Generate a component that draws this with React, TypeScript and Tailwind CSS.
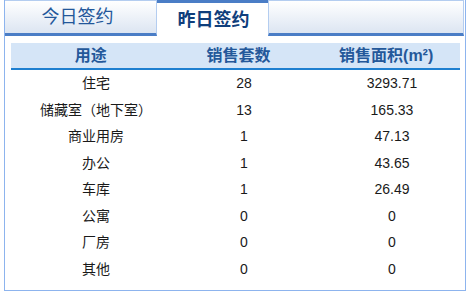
import React from "react";

const rows: [string, string, string][] = [
  ["住宅", "28", "3293.71"],
  ["储藏室（地下室）", "13", "165.33"],
  ["商业用房", "1", "47.13"],
  ["办公", "1", "43.65"],
  ["车库", "1", "26.49"],
  ["公寓", "0", "0"],
  ["厂房", "0", "0"],
  ["其他", "0", "0"],
];

export default function App() {
  return (
    <div
      className="w-[469px] h-[291px] bg-white overflow-hidden"
      style={{ fontFamily: '"Liberation Sans", "Noto Sans CJK SC", sans-serif' }}
    >
      <div className="ml-[4px] w-[462px] h-[291px] border-l border-r border-b border-[#8db4ee] flex flex-col">
        {/* tabs */}
        <div className="flex h-[36px]">
          <div className="w-[152px] h-[36px] border-t border-r border-[#b4cdf0] border-b-[3px] border-b-[#4a7dc6] bg-gradient-to-b from-white to-[#dce5f2] flex items-center justify-center pr-[6px] text-[18px] leading-[20px] text-[#23579a]">
            今日签约
          </div>
          <div className="w-[111px] h-[36px] border-t-[3px] border-[#4a7dc6] bg-white flex items-center justify-center text-[18px] leading-[20px] font-bold text-[#0f3e7c] pl-[2px]">
            昨日签约
          </div>
          <div className="w-[196px] h-[36px] border-t border-l border-r border-[#b4cdf0] border-b-[3px] border-b-[#4a7dc6] bg-gradient-to-b from-white to-[#dce5f2]" />
        </div>
        {/* header */}
        <div className="mt-[7px] ml-[6px] w-[449px] h-[27px] bg-[#d5e5f7] border-b-2 border-[#1e7fd0] flex pl-[6px] text-[16px] leading-[25px] font-bold text-[#24589a]">
          <div className="w-[148px] text-center">用途</div>
          <div className="w-[148px] text-center">销售套数</div>
          <div className="w-[148px] text-center">销售面积(m²)</div>
        </div>
        {/* body */}
        <div className="ml-[17px] flex flex-col text-[14px] text-[#1a1a1a]">
          {rows.map((r, i) => (
            <div key={i} className="flex h-[26.5px] items-center leading-[16px]">
              <div className="w-[148px] text-center shrink-0">{r[0]}</div>
              <div className="w-[148px] text-center shrink-0">{r[1]}</div>
              <div className="w-[148px] text-center shrink-0">{r[2]}</div>
            </div>
          ))}
        </div>
      </div>
    </div>
  );
}
